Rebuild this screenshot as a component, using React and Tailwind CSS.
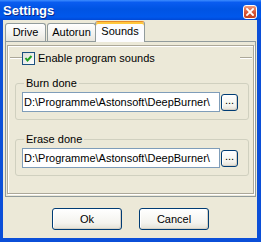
import React from 'react';

function Tab({ label, className }) {
  return (
    <div
      className={`h-[18px] flex items-center justify-center rounded-t-[3px] border-x border-t border-[#919b9c] bg-[linear-gradient(to_bottom,#ffffff,#f3f2ee_60%,#e8e6dd)] text-[11px] leading-[13px] text-black ${className}`}
    >
      {label}
    </div>
  );
}

function SelectedTab({ label, className }) {
  return (
    <div
      className={`relative z-10 -mb-px h-[21px] flex justify-center pt-[3px] rounded-t-[3px] border-x border-t border-[#919b9c] border-t-[#e68b2c] bg-[#fcfcfe] shadow-[inset_0_2px_0_#ffc73c] text-[11px] leading-[13px] text-black ${className}`}
    >
      {label}
    </div>
  );
}

function XpButton({ children, className }) {
  return (
    <button
      type="button"
      className={`flex items-center justify-center rounded-[3px] border border-[#003c74] bg-[linear-gradient(to_bottom,#ffffff,#f4f3ee_70%,#e4e1d6)] shadow-[inset_-1px_-1px_0_#d6d0c5,inset_1px_1px_0_#ffffff] text-[11px] leading-[13px] text-black ${className}`}
    >
      {children}
    </button>
  );
}

function PathGroup({ title, value, className }) {
  return (
    <fieldset className={`ml-[7px] mr-[4px] rounded-[3px] border border-[#d0d0bf] px-[6px] pb-[7px] ${className}`}>
      <legend className="ml-[2px] px-[2px] text-[11px] leading-[13px] text-black">{title}</legend>
      <div className="mt-[2px] flex items-center gap-[1px]">
        <div className="h-[20px] w-[198px] flex items-center overflow-hidden whitespace-nowrap border border-[#7f9db9] bg-white pl-[1px] text-[11px] leading-[13px] text-black">
          {value}
        </div>
        <XpButton className="h-[17px] w-[17px] pb-[3px]">...</XpButton>
      </div>
    </fieldset>
  );
}

export default function App() {
  const path = 'D:\\Programme\\Astonsoft\\DeepBurner\\';

  return (
    <div className="w-[261px] h-[242px] flex flex-col bg-[#ece9d8] font-['Liberation_Sans',Arial,sans-serif] select-none">
      {/* title bar */}
      <div className="h-[20px] flex items-start justify-between pl-[3px] pr-[4px] bg-[linear-gradient(to_bottom,#3d8dff_0%,#0a5cf0_12%,#0054e3_45%,#0058ec_85%,#0048d6_100%)]">
        <span className="mt-[4px] text-[13px] leading-[14px] font-bold text-white [text-shadow:1px_1px_0_#0a2a8c]">Settings</span>
        <div className="mt-[5px] h-[14px] w-[14px] flex items-center justify-center rounded-[3px] border border-white bg-[linear-gradient(to_bottom,#ee9a7e,#d9593a_50%,#c4401f)]">
          <svg width="8" height="8" viewBox="0 0 8 8">
            <path d="M1 1 L7 7 M7 1 L1 7" stroke="#ffffff" strokeWidth="1.8" strokeLinecap="square" />
          </svg>
        </div>
      </div>

      {/* body */}
      <div className="flex-1 flex flex-col border-l-[3px] border-r-[4px] border-b-[4px] border-[#0b4fd8] pl-[2px] pr-[1px]">
        <div className="h-[21px] flex items-end">
          <Tab label="Drive" className="w-[41px]" />
          <Tab label="Autorun" className="ml-[1px] w-[49px]" />
          <SelectedTab label="Sounds" className="-ml-px w-[50px]" />
        </div>

        <div className="h-[156px] flex flex-col border border-[#919b9c] pl-[1px] pr-[1px] pt-[3px] pb-[2px]">
          <div className="flex-1 flex flex-col border border-[#aca899] shadow-[1px_1px_0_#ffffff,inset_1px_1px_0_#ffffff]">
            <div className="mt-[4px] h-[16px] flex items-center pl-[2px] pr-[1px]">
              <div className="w-[12px] border-t border-b border-t-[#aca899] border-b-white" />
              <label className="w-[218px] h-full flex items-center gap-[3px] bg-[#ece9d8]">
                <span className="h-[13px] w-[13px] flex items-center justify-center border border-[#1c5180] bg-[linear-gradient(135deg,#dcdcd7,#ffffff)]">
                  <svg width="11" height="11" viewBox="0 0 11 11">
                    <path d="M2.5 5 L4.5 7.5 L8.5 3" fill="none" stroke="#21a121" strokeWidth="2" />
                  </svg>
                </span>
                <span className="text-[11px] leading-[13px] text-black">Enable program sounds</span>
              </label>
              <div className="flex-1 border-t border-b border-t-[#aca899] border-b-white" />
            </div>

            <PathGroup title="Burn done" value={path} className="mt-[11px]" />
            <PathGroup title="Erase done" value={path} className="mt-[13px]" />
          </div>
        </div>

        <div className="mt-[11px] flex justify-center gap-[17px]">
          <XpButton className="h-[22px] w-[70px]">Ok</XpButton>
          <XpButton className="h-[22px] w-[70px]">Cancel</XpButton>
        </div>
      </div>
    </div>
  );
}
